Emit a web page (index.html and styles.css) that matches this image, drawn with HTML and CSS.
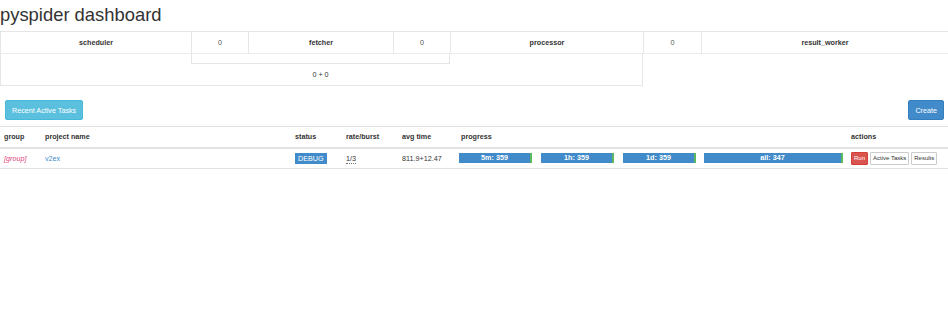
FILE: index.html
```html
<!DOCTYPE html>
<html lang="en">
<head>
    <meta charset="UTF-8">
    <meta name="viewport" content="width=device-width, initial-scale=1.0">
    <title>pyspider dashboard</title>
    <link rel="stylesheet" href="styles.css">
</head>
<body>
    <header>
        <h1>pyspider dashboard</h1>
    </header>

    <section class="queues">
        <div class="q-cell q-name">scheduler</div>
        <div class="q-cell">0</div>
        <div class="q-cell q-name">fetcher</div>
        <div class="q-cell">0</div>
        <div class="q-cell q-name">processor</div>
        <div class="q-cell">0</div>
        <div class="q-cell q-name q-last">result_worker</div>

        <div class="q-lower">
            <div class="q-pipe"></div>
            <div class="q-sum">0 + 0</div>
        </div>
        <div class="q-rest"></div>
    </section>

    <div class="toolbar">
        <button class="btn btn-info">Recent Active Tasks</button>
        <button class="btn btn-primary">Create</button>
    </div>

    <table class="projects">
        <colgroup>
            <col class="c-group">
            <col class="c-name">
            <col class="c-status">
            <col class="c-rate">
            <col class="c-time">
            <col class="c-progress">
            <col>
        </colgroup>
        <thead>
            <tr>
                <th>group</th>
                <th>project name</th>
                <th>status</th>
                <th>rate/burst</th>
                <th>avg time</th>
                <th>progress</th>
                <th>actions</th>
            </tr>
        </thead>
        <tbody>
            <tr>
                <td><span class="group-name">[group]</span></td>
                <td><a class="project-link" href="#">v2ex</a></td>
                <td><span class="label">DEBUG</span></td>
                <td><abbr class="rate">1/3</abbr></td>
                <td>811.9+12.47</td>
                <td class="progress-cell">
                    <div class="bars">
                        <div class="bar w-short"><span class="fill">5m: 359</span><span class="done"></span></div>
                        <div class="bar w-short"><span class="fill">1h: 359</span><span class="done"></span></div>
                        <div class="bar w-short"><span class="fill">1d: 359</span><span class="done"></span></div>
                        <div class="bar w-long"><span class="fill">all: 347</span><span class="done"></span></div>
                    </div>
                </td>
                <td>
                    <div class="actions">
                        <button class="btn-xs btn-run">Run</button>
                        <button class="btn-xs">Active Tasks</button>
                        <button class="btn-xs">Results</button>
                    </div>
                </td>
            </tr>
        </tbody>
    </table>
</body>
</html>
```

FILE: styles.css
```css
* {
    box-sizing: border-box;
}

body {
    margin: 0;
    font-family: "Liberation Sans", Arial, sans-serif;
    font-size: 7.2px;
    color: #333;
    background-color: white;
}

h1 {
    margin: 0;
    height: 31px;
    line-height: 30px;
    font-size: 18.4px;
    font-weight: normal;
    color: #333;
}

/* queue overview */
.queues {
    display: grid;
    grid-template-columns: 191px 57px 145px 57px 193px 58px 1fr;
}

.q-cell {
    height: 23px;
    line-height: 21px;
    text-align: center;
    color: #555;
    border-top: 1px solid #e6e6e6;
    border-bottom: 1px solid #ececec;
    border-left: 1px solid #e6e6e6;
}

.q-name {
    font-weight: bold;
    color: #333;
}

.q-lower {
    grid-column: 1 / 6;
    height: 32px;
    border-left: 1px solid #e6e6e6;
    border-right: 1px solid #e6e6e6;
    border-bottom: 1px solid #e6e6e6;
}

.q-pipe {
    margin-left: 190px;
    width: 259px;
    height: 10px;
    border: 1px solid #e6e6e6;
    border-top: none;
}

.q-sum {
    margin-left: 190px;
    width: 259px;
    line-height: 21px;
    text-align: center;
}

.q-rest {
    grid-column: 6 / 8;
}

/* buttons */
.toolbar {
    display: flex;
    justify-content: space-between;
    padding: 0 4px 0 5px;
    margin-top: 14px;
}

.btn {
    height: 20px;
    padding: 0 6px;
    border: 1px solid transparent;
    border-radius: 2px;
    font-family: inherit;
    font-size: 7.2px;
    color: white;
}

.btn-info {
    background-color: #5bc0de;
    border-color: #46b8da;
}

.btn-primary {
    background-color: #428bca;
    border-color: #357ebd;
}

/* project table */
.projects {
    width: 100%;
    margin-top: 6px;
    border-collapse: collapse;
    table-layout: fixed;
}

.c-group { width: 41px; }
.c-name { width: 250px; }
.c-status { width: 51px; }
.c-rate { width: 56px; }
.c-time { width: 59px; }
.c-progress { width: 390px; }

.projects th,
.projects td {
    padding: 0 4px;
    text-align: left;
    white-space: nowrap;
}

.projects thead tr {
    border-top: 1px solid #e2e2e2;
    border-bottom: 2px solid #e2e2e2;
}

.projects th {
    height: 21px;
    font-weight: bold;
}

.projects tbody tr {
    border-bottom: 1px solid #e2e2e2;
}

.projects td {
    height: 21px;
}

.group-name {
    font-style: italic;
    color: #e0457b;
}

.project-link {
    color: #428bca;
    text-decoration: none;
}

.label {
    display: inline-block;
    padding: 0 3px;
    line-height: 11px;
    color: white;
    background-color: #428bca;
}

.rate {
    text-decoration: none;
    border-bottom: 1px dotted #777;
}

.progress-cell {
    padding-left: 2px !important;
}

.bars {
    display: flex;
    gap: 9px;
}

.bar {
    display: flex;
    height: 10px;
    background-color: #f5f5f5;
}

.w-short { width: 73px; }
.w-long { width: 139px; margin-left: -1px; }

.bar .fill {
    flex: 1;
    line-height: 10px;
    text-align: center;
    font-weight: bold;
    color: white;
    background-color: #428bca;
}

.bar .done {
    width: 2px;
    background-color: #5cb85c;
}

.actions {
    display: flex;
    gap: 2px;
}

.btn-xs {
    height: 13px;
    padding: 0 2px;
    border: 1px solid #ccc;
    border-radius: 1px;
    font-family: inherit;
    font-size: 6px;
    color: #333;
    background-color: white;
}

.btn-run {
    color: white;
    background-color: #d9534f;
    border-color: #d43f3a;
}
```
